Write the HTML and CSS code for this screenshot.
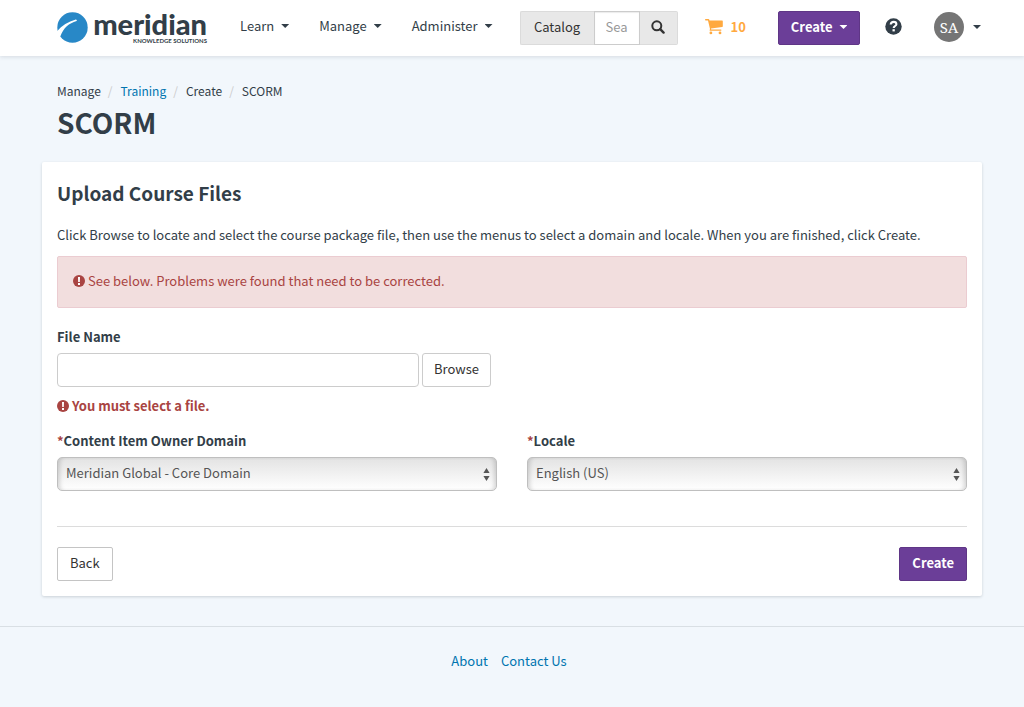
FILE: index.html
```html
<!DOCTYPE html>
<html lang="en">
<head>
<meta charset="utf-8">
<meta name="viewport" content="width=device-width, initial-scale=1">
<title>SCORM</title>
<link rel="stylesheet" href="styles.css">
</head>
<body>
<header class="site-header">
  <div class="header-inner">
    <a class="logo" href="#">
      <svg class="logo-mark" viewBox="0 0 31 31" aria-hidden="true">
        <circle cx="15.500" cy="15.500" r="15.200" fill="#2888c7"/>
        <path d="M0 19.200C5 13.500 11 9.800 18.800 7.600Q20.600 7.700 19.600 8.900C12 11.300 6.500 15.500 3.300 24.500L0 26Z" fill="#fff"/>
      </svg>
      <span class="logo-text">
        <span class="logo-name">meridian</span>
        <span class="logo-tag">KNOWLEDGE SOLUTIONS</span>
      </span>
    </a>
    <nav class="main-nav">
      <a class="nav-link" href="#">Learn<span class="caret"></span></a>
      <a class="nav-link" href="#">Manage<span class="caret"></span></a>
      <a class="nav-link" href="#">Administer<span class="caret"></span></a>
    </nav>
    <form class="search">
      <button class="search-scope" type="button">Catalog</button>
      <input class="search-input" type="text" placeholder="Search" aria-label="Search">
      <button class="search-go" type="button" aria-label="Search">
        <svg width="14" height="14" viewBox="0 0 14 14" fill="none" stroke="#333" aria-hidden="true"><circle cx="5.800" cy="5.800" r="4.500" stroke-width="2"/><path d="M9.200 9.200L12.600 12.600" stroke-width="2.400" stroke-linecap="round"/></svg>
      </button>
    </form>
    <a class="cart" href="#">
      <svg width="18" height="16" viewBox="0 0 18 16" aria-hidden="true"><path d="M.7 0H3.500Q4 0 4.200.5L4.500 1.500H17.200Q17.800 1.500 17.800 2.200V7.200Q17.800 7.900 17.200 8L6 9.400L6.200 10.500H15.800Q16.500 10.500 16.500 11.100T15.800 11.800H5.300Q4.600 11.800 4.600 11.200L5 10L3 1.400H.7Q0 1.400 0 .7T.7 0Z"/><circle cx="5.900" cy="13.900" r="1.400"/><circle cx="15" cy="13.900" r="1.400"/></svg>
      <span>10</span>
    </a>
    <button class="btn btn-primary header-create" type="button">Create<span class="caret"></span></button>
    <a class="help" href="#" aria-label="Help">
      <svg width="17" height="17" viewBox="0 0 17 17" aria-hidden="true"><circle cx="8.500" cy="8.500" r="8.200" fill="#323e48"/><path d="M5.700 6.500C5.900 4.700 7 3.900 8.600 3.900C10.200 3.900 11.400 4.800 11.400 6.200C11.400 8 8.700 8 8.700 10" fill="none" stroke="#fff" stroke-width="2.100"/><path d="M7.500 11.200H9.800V13.400H7.500Z" fill="#fff"/></svg>
    </a>
    <a class="account" href="#"><span class="avatar">SA</span><span class="caret"></span></a>
  </div>
</header>

<main class="container">
  <ol class="breadcrumb">
    <li>Manage</li>
    <li><a href="#">Training</a></li>
    <li>Create</li>
    <li>SCORM</li>
  </ol>
  <h1 class="page-title">SCORM</h1>

  <form class="card">
    <h2 class="card-title">Upload Course Files</h2>
    <p class="intro">Click Browse to locate and select the course package file, then use the menus to select a domain and locale. When you are finished, click Create.</p>
    <div class="alert" role="alert">
      <svg class="error-icon" viewBox="0 0 12 12" aria-hidden="true"><circle cx="6" cy="6" r="6" fill="#a94442"/><path d="M5 2H7L6.800 7H5.200ZM5 8H7V10H5Z" fill="#fff"/></svg>
      <span>See below. Problems were found that need to be corrected.</span>
    </div>

    <label class="label" for="file">File Name</label>
    <div class="file-row">
      <input class="file-input" id="file" type="text">
      <button class="btn btn-browse" type="button">Browse</button>
    </div>
    <p class="field-error">
      <svg class="error-icon" viewBox="0 0 12 12" aria-hidden="true"><circle cx="6" cy="6" r="6" fill="#a94442"/><path d="M5 2H7L6.800 7H5.200ZM5 8H7V10H5Z" fill="#fff"/></svg>
      <span>You must select a file.</span>
    </p>

    <div class="field-grid">
      <div>
        <label class="label" for="domain"><span class="required">*</span>Content Item Owner Domain</label>
        <div class="select-wrap">
          <select class="select" id="domain"><option>Meridian Global - Core Domain</option></select>
          <svg class="select-arrows" viewBox="0 0 7 13" aria-hidden="true"><path d="M3.500 0L6.600 5H.4ZM3.500 13L.4 8H6.600Z" fill="#555"/></svg>
        </div>
      </div>
      <div>
        <label class="label" for="locale"><span class="required">*</span>Locale</label>
        <div class="select-wrap">
          <select class="select" id="locale"><option>English (US)</option></select>
          <svg class="select-arrows" viewBox="0 0 7 13" aria-hidden="true"><path d="M3.500 0L6.600 5H.4ZM3.500 13L.4 8H6.600Z" fill="#555"/></svg>
        </div>
      </div>
    </div>

    <div class="actions">
      <button class="btn" type="button">Back</button>
      <button class="btn btn-primary" type="button">Create</button>
    </div>
  </form>
</main>

<footer class="site-footer">
  <a href="#">About</a>
  <a href="#">Contact Us</a>
</footer>
</body>
</html>
```
FILE: styles.css
```css
* { box-sizing: border-box; }

body {
  margin: 0;
  background: #f2f7fc;
  color: #323e48;
  font-family: "Noto Sans CJK SC", "Noto Sans", sans-serif;
  font-size: 13px;
  line-height: 20px;
}

a { color: #0075b0; text-decoration: none; }
button, input, select { font: inherit; margin: 0; }
svg { display: block; flex: none; }

.site-header {
  background: #fff;
  box-shadow: 0 1px 4px rgba(50, 62, 72, 0.15);
}
.header-inner {
  display: flex;
  align-items: center;
  max-width: 940px;
  height: 56px;
  margin: 0 auto;
  padding-left: 15px;
}
.header-inner > * { flex: none; }

.logo { display: flex; align-items: center; gap: 6px; color: #323e48; padding-bottom: 2px; }
.logo-mark { width: 31px; height: 31px; }
.logo-text { display: flex; flex-direction: column; align-items: flex-end; width: 113px; }
.logo-name { font: 900 29px/26px Lato, sans-serif; }
.logo-tag { font: 700 6px/7px Lato, sans-serif; white-space: nowrap; }

.main-nav { display: flex; gap: 30px; margin-left: 33px; padding-bottom: 4px; }
.nav-link { display: flex; align-items: center; gap: 7px; color: #323e48; }
.caret {
  width: 8px;
  height: 4px;
  background: currentColor;
  clip-path: polygon(0 0, 100% 0, 50% 100%);
}

.search { display: flex; height: 34px; margin-left: 27px; }
.search-scope, .search-go {
  border: 1px solid #dbdbdb;
  background: #e8e8e8;
  color: #333;
  padding: 0 0 2px;
}
.search-scope { width: 74px; border-radius: 2px 0 0 2px; border-right: 0; }
.search-input {
  width: 46px;
  border: 1px solid #ccc;
  border-radius: 0;
  padding: 0 11px 2px;
  box-shadow: inset 0 1px 1px rgba(0, 0, 0, 0.08);
}
.search-input::placeholder { color: #999; opacity: 1; }
.search-go {
  display: flex;
  align-items: center;
  justify-content: center;
  width: 38px;
  border-left: 0;
  border-radius: 0 2px 2px 0;
}

.cart { display: flex; align-items: center; gap: 8px; margin-left: 27px; padding-bottom: 2px; color: #ffa93f; font-weight: 700; }
.cart svg { fill: currentColor; }

.btn {
  height: 34px;
  padding: 0 12px 2px;
  border: 1px solid #c4c4c4;
  border-radius: 2px;
  background: #fff;
  color: #333;
}
.btn-primary { border-color: #5f3686; background: #6b3e98; color: #fff; font-weight: 700; }
.header-create { display: flex; align-items: center; gap: 7px; margin-left: 32px; }
.help { margin-left: 25px; padding-bottom: 3px; }
.account { display: flex; align-items: center; gap: 9px; margin-left: auto; padding: 0 1px 2px 0; color: #323e48; }
.avatar {
  width: 30px;
  height: 30px;
  border-radius: 50%;
  background: #757575;
  color: #fff;
  font: 15px/30px "Noto Serif", "Liberation Serif", serif;
  text-align: center;
}

.container { max-width: 940px; margin: 0 auto; padding-top: 26px; }
.breadcrumb { display: flex; margin: 0; padding: 0 15px; list-style: none; font-size: 12px; line-height: 18px; }
.breadcrumb li + li::before { content: "/"; padding: 0 8px 0 7px; color: #ccc; }
.page-title { margin: 0; padding: 2px 15px; font-size: 28px; line-height: 40px; }

.card {
  margin-top: 18px;
  padding: 19px 15px 15px;
  border-radius: 2px;
  background: #fff;
  box-shadow: 0 1px 3px rgba(50, 62, 72, 0.2);
}
.card-title { margin: 0; font-size: 19px; line-height: 24px; }
.intro { margin: 20px 0 11px; }
.alert {
  display: flex;
  align-items: center;
  gap: 3px;
  padding: 14px 15px 16px;
  border: 1px solid #ebccd1;
  border-radius: 2px;
  background: #f2dede;
  color: #a94442;
  margin-bottom: 19px;
}
.error-icon { width: 12px; height: 12px; }
.label { display: block; margin-bottom: 6px; font-weight: 700; }
.file-row { display: flex; gap: 3px; }
.file-input {
  width: 362px;
  max-width: 100%;
  height: 34px;
  padding: 0 8px;
  border: 1px solid #ccc;
  border-radius: 4px;
}
.btn-browse { padding: 0 11px 2px; border-color: #ccc; border-radius: 3px; }
.field-error { display: flex; align-items: center; gap: 3px; margin: 9px 0 15px; color: #a94442; font-weight: 700; }
.field-grid { display: grid; grid-template-columns: 1fr 1fr; gap: 30px; }
.required { color: #a94442; }
.select-wrap { position: relative; }
.select {
  appearance: none;
  display: block;
  width: 100%;
  height: 34px;
  padding: 0 24px 2px 8px;
  border: 1px solid #bfbfbf;
  border-radius: 5px;
  background: linear-gradient(#e3e3e3, #fff);
  box-shadow: inset 4px 0 4px -2px rgba(0, 0, 0, 0.15), inset -4px 0 4px -2px rgba(0, 0, 0, 0.15);
  color: #555;
}
.select-arrows { position: absolute; top: 11px; right: 7px; width: 7px; height: 13px; pointer-events: none; }
.actions {
  display: flex;
  justify-content: space-between;
  margin-top: 35px;
  padding-top: 20px;
  border-top: 1px solid #dcdcdc;
}

.site-footer {
  display: flex;
  justify-content: center;
  gap: 13px;
  margin-top: 30px;
  padding: 24px 6px 24px 0;
  border-top: 1px solid #d9dfe4;
}
```
